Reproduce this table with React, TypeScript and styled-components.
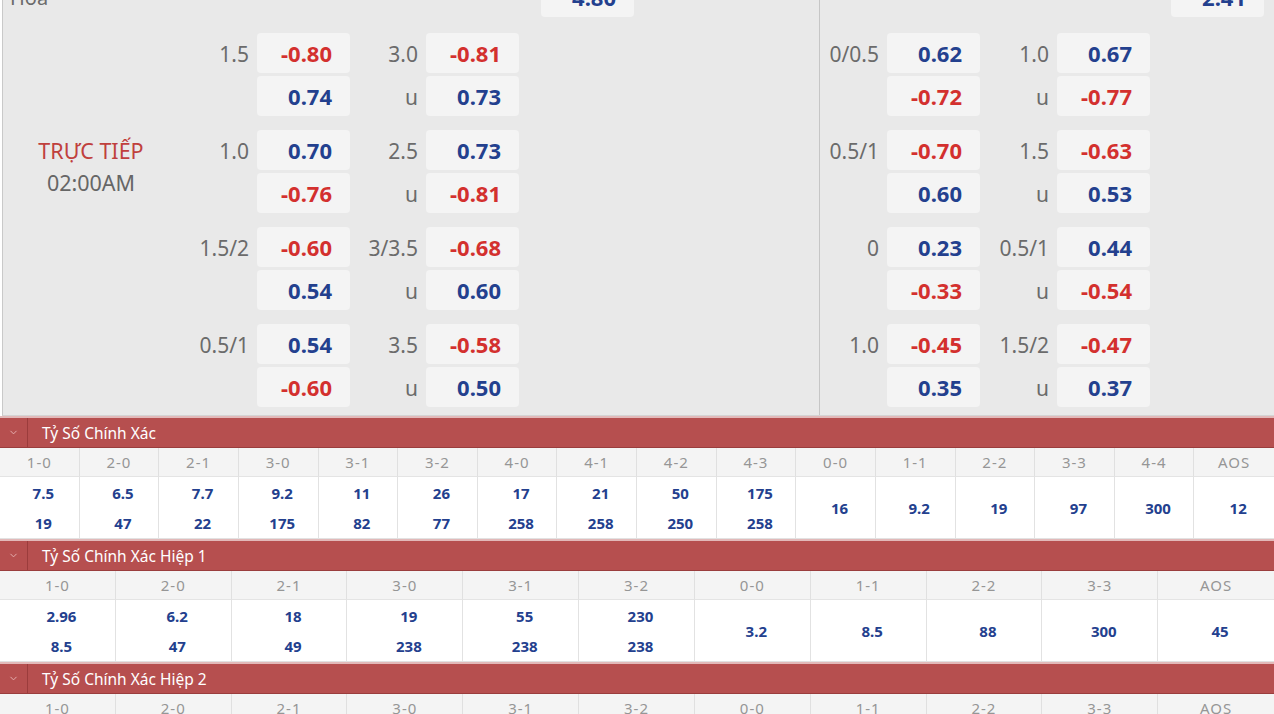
import React from "react";
import styled, { createGlobalStyle } from "styled-components";
import { ChevronDown } from "lucide-react";

const Global = createGlobalStyle`
  html, body { margin: 0; padding: 0; background: #fff; overflow: hidden; }
  body { font-family: "Noto Sans", "Liberation Sans", sans-serif; }
`;

const RED = "#d3302e";
const BLUE = "#23408e";

const Page = styled.div`
  width: 1274px;
  margin-top: -23px;
`;

const Odds = styled.div`
  display: flex;
  background: #e9e9e9;
  margin-left: 2px;
  border-left: 1px solid #c9c9c9;
  border-bottom: 1px solid #d4d4d4;
`;

const Half = styled.div<{ $w?: number }>`
  display: flex;
  flex-direction: column;
  padding-bottom: 8px;
  ${(p) => (p.$w ? `width: ${p.$w}px; flex: none; border-right: 1px solid #c6c6c6;` : `flex: 1;`)}
`;

const TopRow = styled.div`
  display: flex;
  align-items: center;
  height: 40px;
  margin-bottom: 16px;
`;

const TopLabel = styled.div<{ $w: number }>`
  width: ${(p) => p.$w}px;
  flex: none;
  box-sizing: border-box;
  padding-left: 7px;
  font-size: 20px;
  color: #6b6b6b;
`;

const Body = styled.div`
  display: flex;
`;

const TimeCol = styled.div`
  width: 186px;
  flex: none;
  box-sizing: border-box;
  padding: 102px 10px 0 0;
  text-align: center;
  font-size: 21.5px;
  line-height: 32px;
`;

const Live = styled.div`
  color: #c0403d;
`;

const Clock = styled.div`
  color: #666;
`;

const Groups = styled.div`
  display: flex;
  flex-direction: column;
  gap: 14px;
`;

const Group = styled.div`
  display: flex;
  flex-direction: column;
  gap: 3px;
`;

const Line = styled.div`
  display: flex;
  align-items: center;
  height: 40px;
`;

const Label = styled.div<{ $w: number }>`
  width: ${(p) => p.$w}px;
  flex: none;
  box-sizing: border-box;
  padding: 2px 8px 0 0;
  text-align: right;
  font-size: 21px;
  color: #6b6b6b;
`;

const Box = styled.div<{ $c: string }>`
  width: 93px;
  height: 40px;
  flex: none;
  box-sizing: border-box;
  display: flex;
  align-items: center;
  justify-content: flex-end;
  padding-right: 18px;
  background: #f4f4f4;
  border-radius: 4px;
  font-size: 22px;
  font-weight: 700;
  color: ${(p) => p.$c};
`;

const Bar = styled.div`
  display: flex;
  align-items: center;
  height: 29px;
  background: #b64f4f;
  border-top: 2px solid #e2b9b9;
  border-bottom: 1px solid #9a3d3d;
`;

const Toggle = styled.div`
  width: 27px;
  height: 100%;
  flex: none;
  display: flex;
  align-items: center;
  justify-content: center;
  border-right: 1px solid #9b3c3c;
  color: #e7b5b5;
`;

const BarTitle = styled.div`
  padding-left: 14px;
  color: #fff;
  font-size: 15.5px;
`;

const Grid = styled.div<{ $n: number }>`
  display: grid;
  grid-template-columns: repeat(${(p) => p.$n}, 1fr);
`;

const HeadCell = styled.div`
  height: 28px;
  display: flex;
  align-items: center;
  justify-content: center;
  background: #f4f4f4;
  border-right: 1px solid #e0e0e0;
  border-bottom: 1px solid #e4e4e4;
  font-size: 15px;
  letter-spacing: 1px;
  color: #969696;
  &:last-child { border-right: none; }
`;

const ValCell = styled.div`
  height: 61px;
  display: flex;
  flex-direction: column;
  align-items: center;
  justify-content: center;
  padding-left: 8px;
  background: #fff;
  border-right: 1px solid #e2e2e2;
  border-bottom: 1px solid #e2e2e2;
  font-size: 15px;
  font-weight: 700;
  line-height: 30px;
  color: ${BLUE};
  &:last-child { border-right: none; }
`;

type Row = [string, string, string, string];
type G = [Row, Row];

const leftGroups: G[] = [
  [["1.5", "-0.80", "3.0", "-0.81"], ["", "0.74", "u", "0.73"]],
  [["1.0", "0.70", "2.5", "0.73"], ["", "-0.76", "u", "-0.81"]],
  [["1.5/2", "-0.60", "3/3.5", "-0.68"], ["", "0.54", "u", "0.60"]],
  [["0.5/1", "0.54", "3.5", "-0.58"], ["", "-0.60", "u", "0.50"]],
];

const rightGroups: G[] = [
  [["0/0.5", "0.62", "1.0", "0.67"], ["", "-0.72", "u", "-0.77"]],
  [["0.5/1", "-0.70", "1.5", "-0.63"], ["", "0.60", "u", "0.53"]],
  [["0", "0.23", "0.5/1", "0.44"], ["", "-0.33", "u", "-0.54"]],
  [["1.0", "-0.45", "1.5/2", "-0.47"], ["", "0.35", "u", "0.37"]],
];

const col = (v: string) => (v.startsWith("-") ? RED : BLUE);

function OddsGroups({ groups, w1, w2 }: { groups: G[]; w1: number; w2: number }) {
  return (
    <Groups>
      {groups.map((g, i) => (
        <Group key={i}>
          {g.map((r, j) => (
            <Line key={j}>
              <Label $w={w1}>{r[0]}</Label>
              <Box $c={col(r[1])}>{r[1]}</Box>
              <Label $w={w2}>{r[2]}</Label>
              <Box $c={col(r[3])}>{r[3]}</Box>
            </Line>
          ))}
        </Group>
      ))}
    </Groups>
  );
}

type Cell = { k: string; v: string[] };

const s1: Cell[] = [
  { k: "1-0", v: ["7.5", "19"] },
  { k: "2-0", v: ["6.5", "47"] },
  { k: "2-1", v: ["7.7", "22"] },
  { k: "3-0", v: ["9.2", "175"] },
  { k: "3-1", v: ["11", "82"] },
  { k: "3-2", v: ["26", "77"] },
  { k: "4-0", v: ["17", "258"] },
  { k: "4-1", v: ["21", "258"] },
  { k: "4-2", v: ["50", "250"] },
  { k: "4-3", v: ["175", "258"] },
  { k: "0-0", v: ["16"] },
  { k: "1-1", v: ["9.2"] },
  { k: "2-2", v: ["19"] },
  { k: "3-3", v: ["97"] },
  { k: "4-4", v: ["300"] },
  { k: "AOS", v: ["12"] },
];

const s2: Cell[] = [
  { k: "1-0", v: ["2.96", "8.5"] },
  { k: "2-0", v: ["6.2", "47"] },
  { k: "2-1", v: ["18", "49"] },
  { k: "3-0", v: ["19", "238"] },
  { k: "3-1", v: ["55", "238"] },
  { k: "3-2", v: ["230", "238"] },
  { k: "0-0", v: ["3.2"] },
  { k: "1-1", v: ["8.5"] },
  { k: "2-2", v: ["88"] },
  { k: "3-3", v: ["300"] },
  { k: "AOS", v: ["45"] },
];

function Section({ title, cells, values = true }: { title: string; cells: Cell[]; values?: boolean }) {
  return (
    <div>
      <Bar>
        <Toggle>
          <ChevronDown size={11} strokeWidth={2} />
        </Toggle>
        <BarTitle>{title}</BarTitle>
      </Bar>
      <Grid $n={cells.length}>
        {cells.map((c) => (
          <HeadCell key={c.k}>{c.k}</HeadCell>
        ))}
      </Grid>
      {values && (
        <Grid $n={cells.length}>
          {cells.map((c) => (
            <ValCell key={c.k}>
              {c.v.map((x, i) => (
                <div key={i}>{x}</div>
              ))}
            </ValCell>
          ))}
        </Grid>
      )}
    </div>
  );
}

export default function App() {
  return (
    <>
      <Global />
      <Page>
        <Odds>
          <Half $w={816}>
            <TopRow>
              <TopLabel $w={538}>Hòa</TopLabel>
              <Box $c={BLUE}>4.80</Box>
            </TopRow>
            <Body>
              <TimeCol>
                <Live>TRỰC TIẾP</Live>
                <Clock>02:00AM</Clock>
              </TimeCol>
              <OddsGroups groups={leftGroups} w1={68} w2={76} />
            </Body>
          </Half>
          <Half>
            <TopRow>
              <TopLabel $w={351} />
              <Box $c={BLUE}>2.41</Box>
            </TopRow>
            <OddsGroups groups={rightGroups} w1={67} w2={77} />
          </Half>
        </Odds>
        <Section title="Tỷ Số Chính Xác" cells={s1} />
        <Section title="Tỷ Số Chính Xác Hiệp 1" cells={s2} />
        <Section title="Tỷ Số Chính Xác Hiệp 2" cells={s2} values={false} />
      </Page>
    </>
  );
}
